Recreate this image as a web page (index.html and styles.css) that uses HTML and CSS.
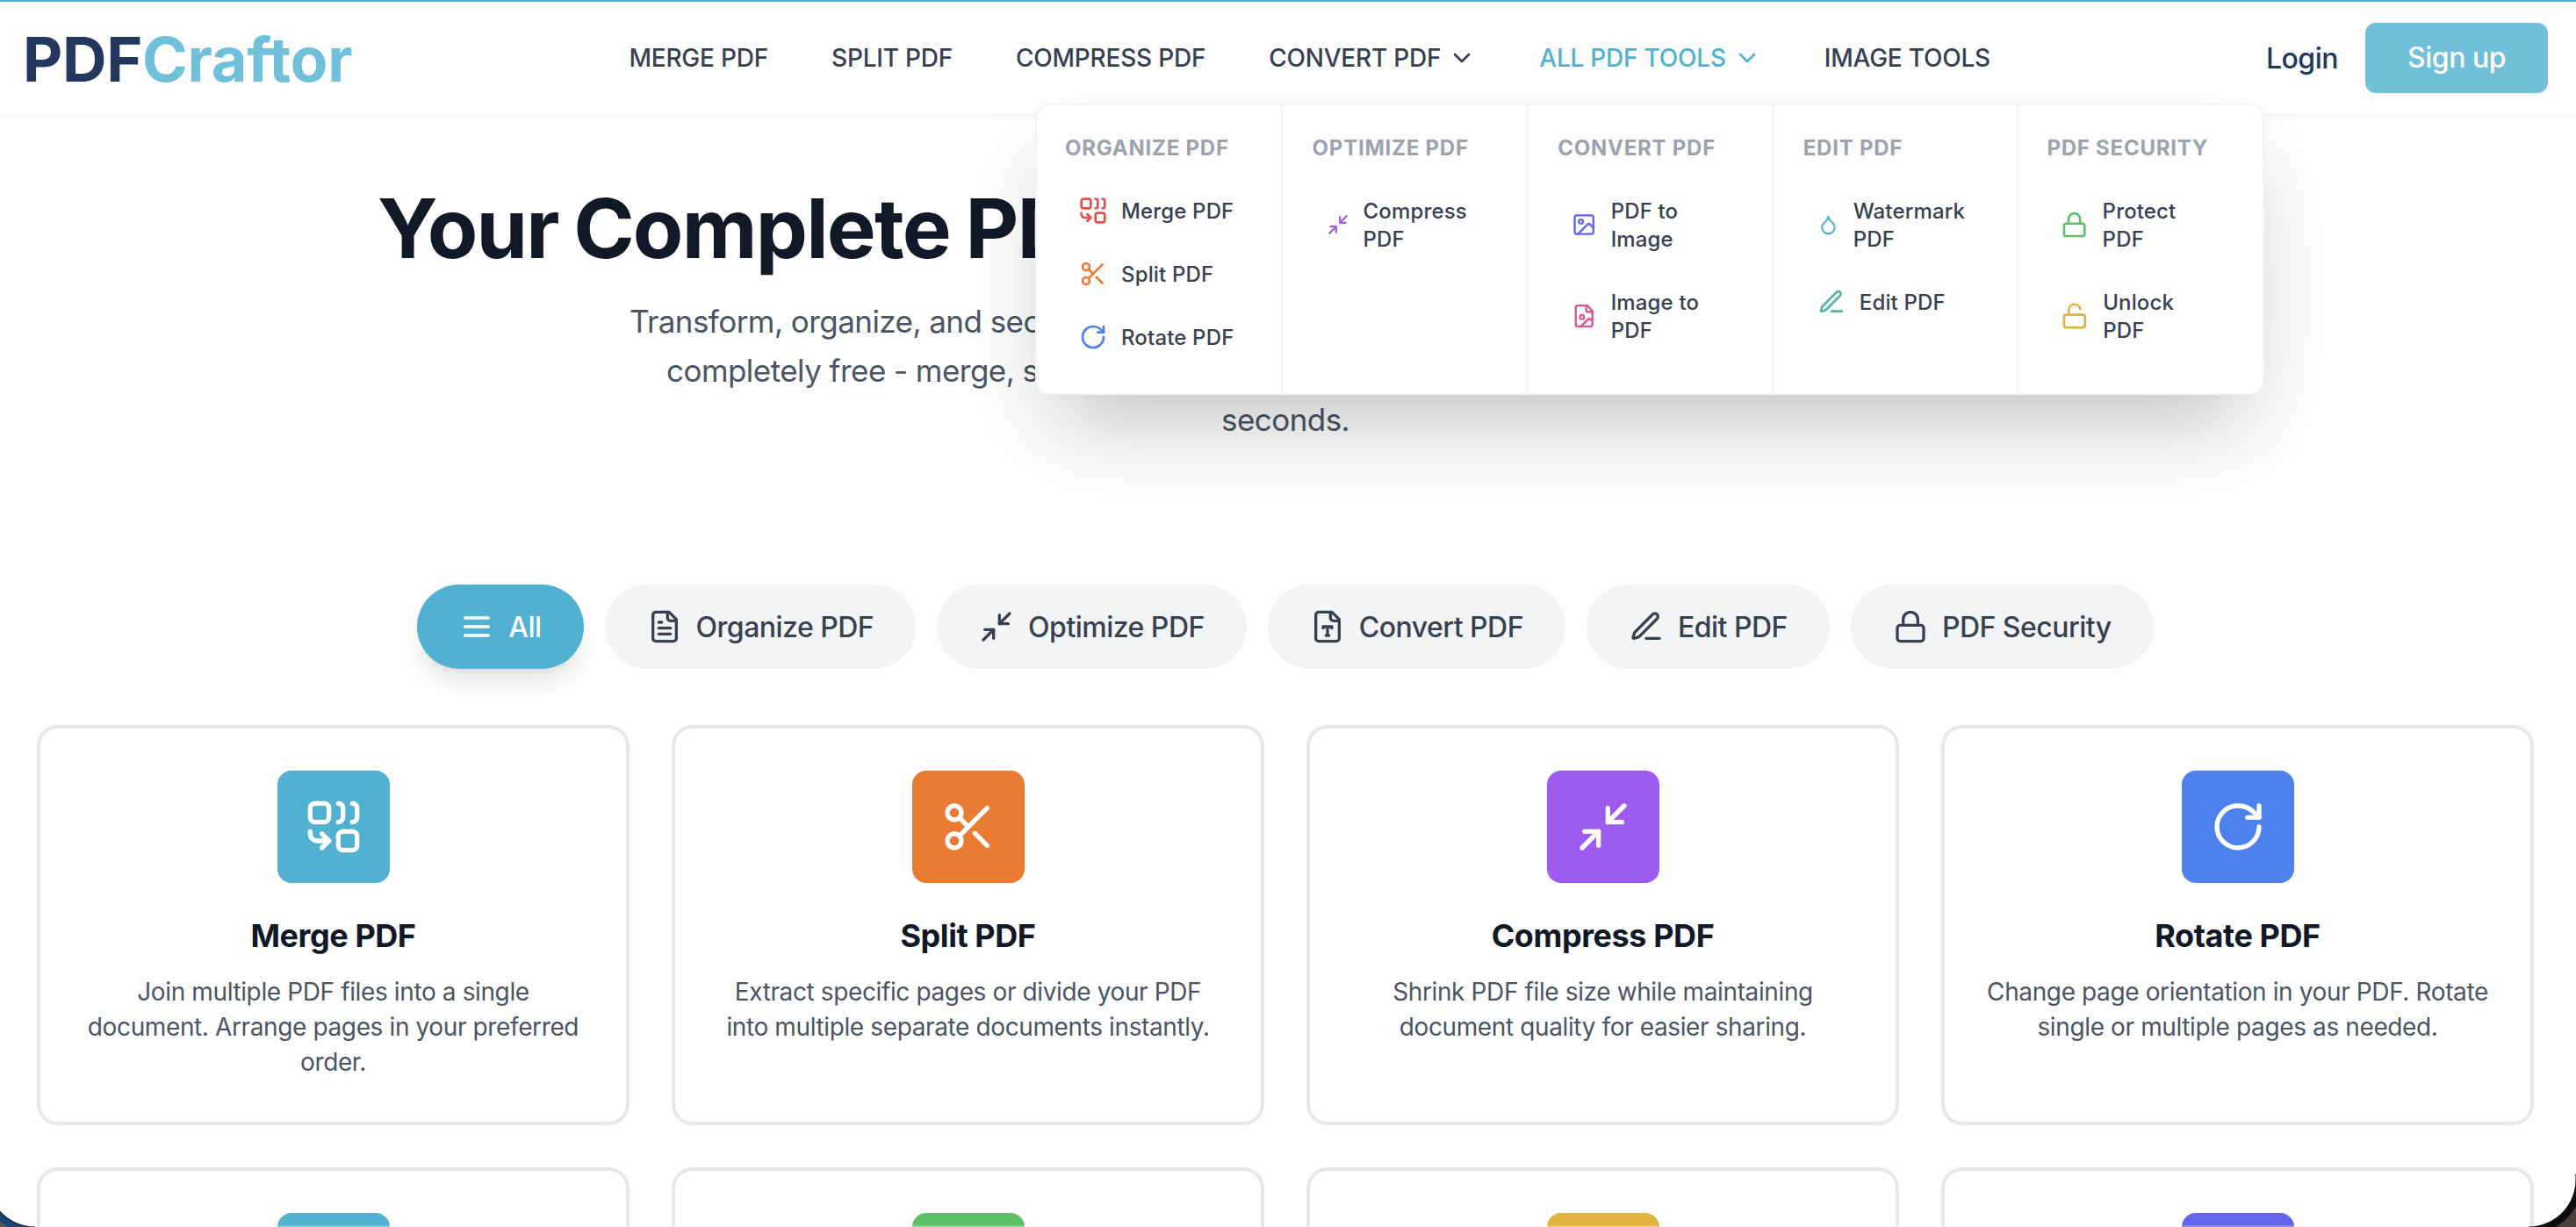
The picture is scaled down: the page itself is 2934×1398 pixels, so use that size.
FILE: index.html
```
<!DOCTYPE html>
<html lang="en">
<head>
    <meta charset="UTF-8">
    <meta name="viewport" content="width=device-width, initial-scale=1.0">
    <title>PDFCraftor</title>
    <link rel="stylesheet" href="styles.css">
</head>
<body>
    <!-- Icon sprite -->
    <svg class="sprite" xmlns="http://www.w3.org/2000/svg">
        <symbol id="i-merge" viewBox="0 0 24 24">
            <rect width="8" height="8" x="2" y="2" rx="2"/>
            <path d="M14 2c1.1 0 2 .9 2 2v4c0 1.1-.9 2-2 2"/>
            <path d="M20 2c1.1 0 2 .9 2 2v4c0 1.1-.9 2-2 2"/>
            <path d="M10 18H5c-1.7 0-3-1.3-3-3v-1"/>
            <polyline points="7 21 10 18 7 15"/>
            <rect width="8" height="8" x="14" y="14" rx="2"/>
        </symbol>
        <symbol id="i-split" viewBox="0 0 24 24">
            <circle cx="6" cy="6" r="3"/>
            <path d="M8.12 8.12 12 12"/>
            <path d="M20 4 8.12 15.88"/>
            <circle cx="6" cy="18" r="3"/>
            <path d="M14.8 14.8 20 20"/>
        </symbol>
        <symbol id="i-rotate" viewBox="0 0 24 24">
            <path d="M21 12a9 9 0 1 1-9-9c2.52 0 4.93 1 6.74 2.74L21 8"/>
            <path d="M21 3v5h-5"/>
        </symbol>
        <symbol id="i-compress" viewBox="0 0 24 24">
            <polyline points="4 14 10 14 10 20"/>
            <polyline points="20 10 14 10 14 4"/>
            <line x1="14" x2="21" y1="10" y2="3"/>
            <line x1="3" x2="10" y1="21" y2="14"/>
        </symbol>
        <symbol id="i-image" viewBox="0 0 24 24">
            <rect width="18" height="18" x="3" y="3" rx="2"/>
            <circle cx="9" cy="9" r="2"/>
            <path d="m21 15-3.086-3.086a2 2 0 0 0-2.828 0L6 21"/>
        </symbol>
        <symbol id="i-file-image" viewBox="0 0 24 24">
            <path d="M15 2H6a2 2 0 0 0-2 2v16a2 2 0 0 0 2 2h12a2 2 0 0 0 2-2V7Z"/>
            <path d="M14 2v4a2 2 0 0 0 2 2h4"/>
            <circle cx="10" cy="13" r="2"/>
            <path d="m20 17-1.296-1.296a2.41 2.41 0 0 0-3.408 0L9 22"/>
        </symbol>
        <symbol id="i-drop" viewBox="0 0 24 24">
            <path d="M12 22a7 7 0 0 0 7-7c0-2-1-3.9-3-5.5s-3.5-4-4-6.5c-.5 2.5-2 4.9-4 6.5C6 11.1 5 13 5 15a7 7 0 0 0 7 7z"/>
        </symbol>
        <symbol id="i-edit" viewBox="0 0 24 24">
            <path d="M12 20h9"/>
            <path d="M16.376 3.622a1 1 0 0 1 3.002 3.002L7.368 18.635a2 2 0 0 1-.855.506l-2.872.838a.5.5 0 0 1-.62-.62l.838-2.872a2 2 0 0 1 .506-.854z"/>
        </symbol>
        <symbol id="i-lock" viewBox="0 0 24 24">
            <rect width="18" height="11" x="3" y="11" rx="2"/>
            <path d="M7 11V7a5 5 0 0 1 10 0v4"/>
        </symbol>
        <symbol id="i-unlock" viewBox="0 0 24 24">
            <rect width="18" height="11" x="3" y="11" rx="2"/>
            <path d="M7 11V7a5 5 0 0 1 9.9-1"/>
        </symbol>
        <symbol id="i-menu" viewBox="0 0 24 24">
            <path d="M4 6h16M4 12h16M4 18h16"/>
        </symbol>
        <symbol id="i-file-text" viewBox="0 0 24 24">
            <path d="M15 2H6a2 2 0 0 0-2 2v16a2 2 0 0 0 2 2h12a2 2 0 0 0 2-2V7Z"/>
            <path d="M14 2v4a2 2 0 0 0 2 2h4"/>
            <path d="M10 9H8M16 13H8M16 17H8"/>
        </symbol>
        <symbol id="i-file-type" viewBox="0 0 24 24">
            <path d="M15 2H6a2 2 0 0 0-2 2v16a2 2 0 0 0 2 2h12a2 2 0 0 0 2-2V7Z"/>
            <path d="M14 2v4a2 2 0 0 0 2 2h4"/>
            <path d="M9 13v-1h6v1M12 12v6M11 18h2"/>
        </symbol>
        <symbol id="i-chevron" viewBox="0 0 24 24">
            <path d="m6 9 6 6 6-6"/>
        </symbol>
    </svg>

    <header class="header">
        <a class="logo">PDF<span>Craftor</span></a>
        <nav class="nav">
            <a>MERGE PDF</a>
            <a>SPLIT PDF</a>
            <a>COMPRESS PDF</a>
            <a>CONVERT PDF <svg class="icon"><use href="#i-chevron"/></svg></a>
            <a class="active">ALL PDF TOOLS <svg class="icon"><use href="#i-chevron"/></svg></a>
            <a>IMAGE TOOLS</a>
        </nav>
        <div class="auth">
            <a class="login">Login</a>
            <a class="signup">Sign up</a>
        </div>

        <div class="mega-menu">
            <div class="menu-col">
                <h4>ORGANIZE PDF</h4>
                <a class="menu-item"><svg class="icon red" viewBox="0 0 24 24"><use href="#i-merge"/></svg><span>Merge PDF</span></a>
                <a class="menu-item"><svg class="icon orange" viewBox="0 0 24 24"><use href="#i-split"/></svg><span>Split PDF</span></a>
                <a class="menu-item"><svg class="icon blue" viewBox="0 0 24 24"><use href="#i-rotate"/></svg><span>Rotate PDF</span></a>
            </div>
            <div class="menu-col">
                <h4>OPTIMIZE PDF</h4>
                <a class="menu-item"><svg class="icon purple" viewBox="0 0 24 24"><use href="#i-compress"/></svg><span>Compress PDF</span></a>
            </div>
            <div class="menu-col">
                <h4>CONVERT PDF</h4>
                <a class="menu-item"><svg class="icon indigo" viewBox="0 0 24 24"><use href="#i-image"/></svg><span>PDF to Image</span></a>
                <a class="menu-item"><svg class="icon pink" viewBox="0 0 24 24"><use href="#i-file-image"/></svg><span>Image to PDF</span></a>
            </div>
            <div class="menu-col">
                <h4>EDIT PDF</h4>
                <a class="menu-item"><svg class="icon cyan" viewBox="0 0 24 24"><use href="#i-drop"/></svg><span>Watermark PDF</span></a>
                <a class="menu-item"><svg class="icon teal" viewBox="0 0 24 24"><use href="#i-edit"/></svg><span>Edit PDF</span></a>
            </div>
            <div class="menu-col">
                <h4>PDF SECURITY</h4>
                <a class="menu-item"><svg class="icon green" viewBox="0 0 24 24"><use href="#i-lock"/></svg><span>Protect PDF</span></a>
                <a class="menu-item"><svg class="icon yellow" viewBox="0 0 24 24"><use href="#i-unlock"/></svg><span>Unlock PDF</span></a>
            </div>
        </div>
    </header>

    <main class="page">
        <section class="hero">
            <h1>Your Complete PDF</h1>
            <p class="line-1">Transform, organize, and secure</p>
            <p class="line-2">completely free - merge, split</p>
            <p>seconds.</p>
        </section>

        <div class="filters">
            <button class="pill selected"><svg class="icon"><use href="#i-menu"/></svg>All</button>
            <button class="pill"><svg class="icon"><use href="#i-file-text"/></svg>Organize PDF</button>
            <button class="pill"><svg class="icon"><use href="#i-compress"/></svg>Optimize PDF</button>
            <button class="pill"><svg class="icon"><use href="#i-file-type"/></svg>Convert PDF</button>
            <button class="pill"><svg class="icon"><use href="#i-edit"/></svg>Edit PDF</button>
            <button class="pill"><svg class="icon"><use href="#i-lock"/></svg>PDF Security</button>
        </div>

        <section class="cards">
            <article class="card">
                <div class="tile bg-cyan"><svg class="icon"><use href="#i-merge"/></svg></div>
                <h3>Merge PDF</h3>
                <p>Join multiple PDF files into a single<br>document. Arrange pages in your preferred<br>order.</p>
            </article>
            <article class="card">
                <div class="tile bg-orange"><svg class="icon"><use href="#i-split"/></svg></div>
                <h3>Split PDF</h3>
                <p>Extract specific pages or divide your PDF<br>into multiple separate documents instantly.</p>
            </article>
            <article class="card">
                <div class="tile bg-purple"><svg class="icon"><use href="#i-compress"/></svg></div>
                <h3>Compress PDF</h3>
                <p>Shrink PDF file size while maintaining<br>document quality for easier sharing.</p>
            </article>
            <article class="card">
                <div class="tile bg-blue"><svg class="icon"><use href="#i-rotate"/></svg></div>
                <h3>Rotate PDF</h3>
                <p>Change page orientation in your PDF. Rotate<br>single or multiple pages as needed.</p>
            </article>
            <article class="card peek"><div class="tile bg-cyan"></div></article>
            <article class="card peek"><div class="tile bg-green"></div></article>
            <article class="card peek"><div class="tile bg-yellow"></div></article>
            <article class="card peek"><div class="tile bg-indigo"></div></article>
        </section>
    </main>

    <!-- Rounded window edge -->
    <div class="edge"></div>
    <div class="corner corner-left"></div>
    <div class="corner corner-right"></div>
</body>
</html>
```
FILE: styles.css
```
* {
    margin: 0;
    padding: 0;
    box-sizing: border-box;
}

body {
    font-family: Inter, "Liberation Sans", sans-serif;
    background: #fefefe;
    color: #374151;
    height: 1398px;
    overflow: hidden;
    position: relative;
}

.sprite {
    display: none;
}

.icon {
    width: 32px;
    height: 32px;
    fill: none;
    stroke: currentColor;
    stroke-width: 2;
    stroke-linecap: round;
    stroke-linejoin: round;
}

/* Header */
.header {
    position: relative;
    z-index: 10;
    display: flex;
    align-items: center;
    height: 132px;
    padding: 0 32px 0 26px;
    border-top: 2px solid #51b1d0;
    border-bottom: 2px solid #f3f4f6;
    background: #fefefe;
    box-shadow: 0 2px 4px rgba(0, 0, 0, 0.02);
}

.logo {
    font-size: 70px;
    font-weight: 700;
    letter-spacing: -0.3px;
    line-height: 80px;
    padding-top: 3px;
    color: #24385e;
}

.logo span {
    color: #71c0da;
}

.nav {
    display: flex;
    gap: 72px;
    margin-left: 315px;
    font-size: 28px;
    font-weight: 500;
    line-height: 40px;
    letter-spacing: -0.22px;
    white-space: nowrap;
}

.nav a {
    display: flex;
    align-items: center;
    gap: 8px;
}

.nav .active {
    color: #51b1d0;
}

.auth {
    display: flex;
    align-items: center;
    gap: 31px;
    margin-left: auto;
    font-size: 32px;
    font-weight: 500;
}

.login {
    color: #24385e;
    letter-spacing: -0.5px;
}

.signup {
    width: 208px;
    height: 80px;
    line-height: 80px;
    text-align: center;
    letter-spacing: -0.5px;
    color: #fff;
    background: #71c0da;
    border-radius: 12px;
}

/* Mega menu */
.mega-menu {
    position: absolute;
    top: 116px;
    left: 1179px;
    width: 1400px;
    height: 332px;
    display: flex;
    background: #fefefe;
    border: 2px solid #f3f4f6;
    border-radius: 16px;
    box-shadow: 0 50px 100px -24px rgba(0, 0, 0, 0.25);
}

.menu-col {
    flex: 1 1 0;
    min-width: 0;
    padding: 33px 30px 31px 34px;
    border-right: 2px solid #f3f4f6;
}

.menu-col:first-child {
    padding-left: 32px;
    padding-right: 32px;
}

.menu-col:last-child {
    padding-left: 32px;
    padding-right: 32px;
    border-right: none;
}

.menu-col h4 {
    font-size: 24px;
    font-weight: 700;
    line-height: 32px;
    letter-spacing: 0.76px;
    color: #9ca3af;
    margin-bottom: 23px;
    white-space: nowrap;
}

.menu-item {
    display: flex;
    align-items: center;
    gap: 16px;
    padding: 16px;
    margin-bottom: 8px;
    font-size: 24px;
    font-weight: 500;
    line-height: 32px;
    letter-spacing: 0.15px;
}

.menu-item span {
    margin: 1px 0 -1px;
    color: #374151;
}

.red { color: #e0524c; }
.orange { color: #e97b33; }
.blue { color: #4e80ee; }
.purple { color: #9d5bef; }
.indigo { color: #6265e9; }
.pink { color: #dd5496; }
.cyan { color: #51b1d0; }
.teal { color: #52b5a2; }
.green { color: #5dc066; }
.yellow { color: #e1b33e; }

/* Hero */
.page {
    height: 1266px;
    overflow: hidden;
    padding: 0 48px 0 42px;
}

.hero {
    padding: 68px 0 160px;
}

.hero h1 {
    width: 2068px;
    margin: 0 auto 18px;
    font-size: 94px;
    font-weight: 700;
    line-height: 120px;
    letter-spacing: -1.8px;
    word-spacing: -3px;
    white-space: nowrap;
    color: #111827;
}

.hero p {
    width: 146px;
    margin: 0 auto;
    font-size: 35px;
    line-height: 56px;
    letter-spacing: -0.55px;
    white-space: nowrap;
    color: #4b5563;
}

.hero .line-1 {
    width: 1494px;
}

.hero .line-2 {
    width: 1410px;
}

/* Category filters */
.filters {
    display: flex;
    justify-content: center;
    gap: 24px;
    margin-bottom: 64px;
}

.pill {
    display: flex;
    align-items: center;
    gap: 16px;
    height: 96px;
    padding: 0 48px;
    border: none;
    border-radius: 48px;
    background: #f3f4f6;
    color: #374151;
    font-family: inherit;
    font-size: 32px;
    font-weight: 500;
    letter-spacing: -0.52px;
}

.pill .icon {
    width: 40px;
    height: 40px;
}

.pill.selected {
    background: #51b1d0;
    color: #fff;
    box-shadow: 0 20px 30px -6px rgba(0, 0, 0, 0.1), 0 8px 12px -8px rgba(0, 0, 0, 0.1);
}

/* Tool cards */
.cards {
    display: grid;
    grid-template-columns: repeat(4, 1fr);
    gap: 48px;
}

.card {
    height: 456px;
    padding: 48px 44px;
    border: 4px solid #e5e7eb;
    border-radius: 24px;
    text-align: center;
}

.tile {
    display: flex;
    align-items: center;
    justify-content: center;
    width: 128px;
    height: 128px;
    margin: 0 auto 32px;
    border-radius: 16px;
    color: #fff;
}

.tile .icon {
    width: 64px;
    height: 64px;
}

/* Cards cut by the bottom of the window */
.card.peek {
    height: 68px;
    padding-bottom: 0;
    border-bottom: none;
    border-radius: 24px 24px 0 0;
}

.peek .tile {
    height: 16px;
    margin-bottom: 0;
    border-radius: 16px 16px 0 0;
}

.bg-cyan { background: #51b1d0; }
.bg-orange { background: #e97b33; }
.bg-purple { background: #9d5bef; }
.bg-blue { background: #4e80ee; }
.bg-green { background: #5dc066; }
.bg-yellow { background: #e1b33e; }
.bg-indigo { background: #6265e9; }

.card h3 {
    font-size: 36px;
    font-weight: 700;
    line-height: 56px;
    letter-spacing: -0.42px;
    color: #111827;
    margin-bottom: 16px;
}

.card p {
    font-size: 28px;
    line-height: 40px;
    letter-spacing: -0.38px;
    white-space: nowrap;
    color: #4b5563;
}

/* Window edge */
.edge {
    position: absolute;
    left: 0;
    right: 0;
    bottom: 0;
    height: 2px;
    background: rgba(255, 255, 255, 0.25);
}

.corner {
    position: absolute;
    bottom: 0;
    height: 60px;
}

.corner-left {
    left: 0;
    width: 40px;
    background: radial-gradient(circle at 40px 6px, transparent 53px, #10233f 54px, #1c4678 56px, #1c4678 61px, #555 63px);
}

.corner-right {
    right: 0;
    width: 54px;
    background: radial-gradient(circle at 0 6px, transparent 53px, #0c0c0c 54px, #0c0c0c 61px, #4a3f3a 63px);
}
```
